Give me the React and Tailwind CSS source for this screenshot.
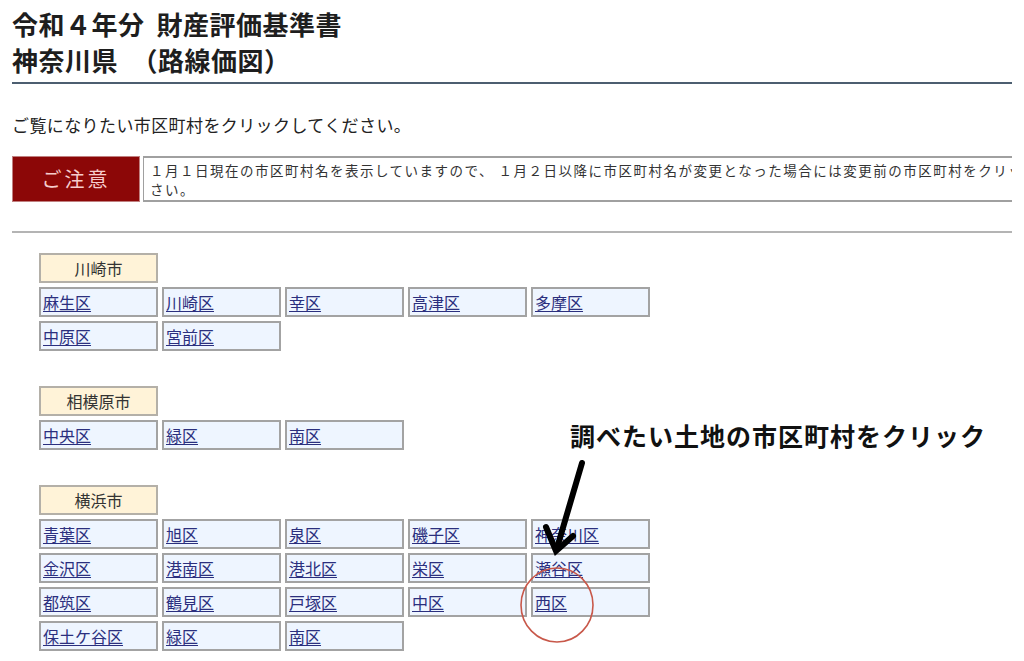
import React from "react";

const kawasaki = ["麻生区", "川崎区", "幸区", "高津区", "多摩区", "中原区", "宮前区"];
const sagamihara = ["中央区", "緑区", "南区"];
const yokohama = [
  "青葉区", "旭区", "泉区", "磯子区", "神奈川区",
  "金沢区", "港南区", "港北区", "栄区", "瀬谷区",
  "都筑区", "鶴見区", "戸塚区", "中区", "西区",
  "保土ケ谷区", "緑区", "南区",
];

function Section({ name, items, className }) {
  return (
    <div className={className}>
      <div className="w-[119px] h-[30px] bg-[#fff3d8] border-2 border-[#b4b0a8] flex items-center justify-center text-[16px] text-[#333] leading-none">
        {name}
      </div>
      <div className="mt-[4px] grid grid-cols-[repeat(5,119px)] gap-x-[4px] gap-y-[4px]">
        {items.map((d, i) => (
          <div
            key={i}
            className="h-[30px] bg-[#eef5ff] border-2 border-[#a3a3a3] flex items-center pl-[2px] text-[16px] leading-none"
          >
            <a href="#" className="text-[#2b2f7e] underline underline-offset-2 decoration-1">
              {d}
            </a>
          </div>
        ))}
      </div>
    </div>
  );
}

export default function App() {
  return (
    <div className="relative w-[1024px] h-[661px] overflow-hidden bg-white text-[#222] font-['Noto_Sans_CJK_JP','Noto_Sans',sans-serif]">
      <div className="pl-[12px] w-[1012px]">
        <div className="pt-[6px] pb-[4px] border-b-2 border-[#4c5e70] text-[26px] font-bold leading-[36px] tracking-[0.5px] text-[#1e1e1e]">
          <div>令和４年分<span className="ml-[12px]">財産評価基準書</span></div>
          <div>神奈川県　（路線価図）</div>
        </div>

        <p className="mt-[29px] text-[17px] leading-[24px] tracking-[0.4px] text-[#222]">
          ご覧になりたい市区町村をクリックしてください。
        </p>

        <div className="mt-[19px] flex gap-[3px] overflow-hidden">
          <div className="shrink-0 w-[128px] h-[46px] bg-[#8c0707] border border-[#c08080] flex items-center justify-center text-[20px] tracking-[3px] text-[#f6cccc]">
            ご注意
          </div>
          <div className="shrink-0 w-[970px] h-[46px] border-y-2 border-l border-[#a0a0a0] pl-[6px] pr-[6px] pt-[3px] text-[13.5px] leading-[19px] tracking-[1.5px] text-[#333]">
            １月１日現在の市区町村名を表示していますので、 １月２日以降に市区町村名が変更となった場合には変更前の市区町村をクリックしてください。
          </div>
        </div>

        <div className="mt-[29px] border-t-2 border-[#b4b4b4]" />

        <div className="ml-[27px] mt-[20px]">
          <Section name="川崎市" items={kawasaki} />
          <Section name="相模原市" items={sagamihara} className="mt-[35px]" />
          <Section name="横浜市" items={yokohama} className="mt-[35px]" />
        </div>
      </div>

      <div className="absolute left-[570px] top-[421px] text-[25px] font-bold leading-[28px] tracking-[1px] text-[#111] whitespace-nowrap">
        調べたい土地の市区町村をクリック
      </div>

      <svg className="absolute left-0 top-0 pointer-events-none" width="1024" height="661" viewBox="0 0 1024 661">
        <line x1="582" y1="463" x2="557" y2="548" stroke="#000" strokeWidth="6" strokeLinecap="round" />
        <path d="M546 527 L556 551 L573 536" fill="none" stroke="#000" strokeWidth="6" strokeLinejoin="miter" strokeLinecap="round" />
        <ellipse cx="557" cy="605" rx="36" ry="37" fill="none" stroke="#c8584a" strokeWidth="1.6" />
      </svg>
    </div>
  );
}
